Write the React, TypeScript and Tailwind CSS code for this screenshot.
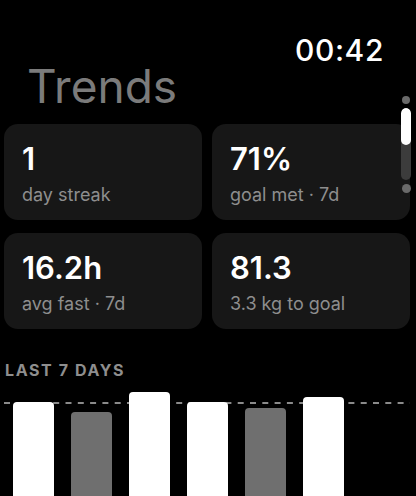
import React from 'react';

const stats = [
  { value: '1', label: 'day streak' },
  { value: '71%', label: 'goal met · 7d' },
  { value: '16.2h', label: 'avg fast · 7d' },
  { value: '81.3', label: '3.3 kg to goal' },
];

// bar heights in px, hit = reached the goal that day
const days = [
  { h: 94, hit: true },
  { h: 84, hit: false },
  { h: 104, hit: true },
  { h: 94, hit: true },
  { h: 88, hit: false },
  { h: 99, hit: true },
  { h: 0, hit: false },
];

export default function App() {
  return (
    <div
      className="relative w-[416px] h-[496px] overflow-hidden bg-black text-white"
      style={{ fontFamily: 'Inter, "Noto Sans", sans-serif' }}
    >
      {/* Header */}
      <div className="flex justify-end pr-[32px] pt-[32px]">
        <span className="text-[30px] leading-[36px] font-medium tracking-[0.6px]">00:42</span>
      </div>
      <h1 className="pl-[27px] -mt-[9px] text-[46px] leading-[54px] font-normal text-[#7b7b7b]">Trends</h1>

      {/* Stat cards */}
      <div className="mt-[11px] ml-[4px] mr-[6px] grid grid-cols-2 gap-x-[10px] gap-y-[13px]">
        {stats.map((s) => (
          <div key={s.value} className="h-[96px] rounded-[14px] bg-[#171717] pl-[18px] pt-[17px]">
            <div className="text-[31px] leading-[36px] font-semibold">{s.value}</div>
            <div className="mt-[7px] text-[18px] leading-[22px] text-[#8e8e8e]">{s.label}</div>
          </div>
        ))}
      </div>

      {/* Last 7 days */}
      <div className="mt-[29px] pl-[5px] text-[16px] leading-[24px] font-bold tracking-[1.6px] text-[#8e8e8e]">
        LAST 7 DAYS
      </div>
      <div className="relative mt-[10px] h-[104px]">
        <svg className="absolute left-0 top-[10px]" width="416" height="2">
          <line x1="4" y1="1" x2="410" y2="1" stroke="#8a8a8a" strokeWidth="2" strokeDasharray="6 6.3" />
        </svg>
        <div className="relative flex h-full items-end gap-[17px] pl-[13px]">
          {days.map((d, i) => (
            <div
              key={i}
              className={`w-[41px] rounded-t-[4px] ${d.hit ? 'bg-white' : 'bg-[#6f6f6f]'}`}
              style={{ height: d.h }}
            />
          ))}
        </div>
      </div>

      {/* Scroll indicator */}
      <div className="absolute right-[5px] top-[96px] flex w-[10px] flex-col items-center gap-[4px]">
        <div className="h-[8px] w-[8px] rounded-full bg-[#6a6a6a]" />
        <div className="flex h-[72px] w-[10px] flex-col overflow-hidden rounded-full bg-[#3c3c3c]">
          <div className="h-[37px] w-full rounded-full bg-white" />
        </div>
        <div className="h-[9px] w-[9px] rounded-full bg-[#6a6a6a]" />
      </div>
    </div>
  );
}
